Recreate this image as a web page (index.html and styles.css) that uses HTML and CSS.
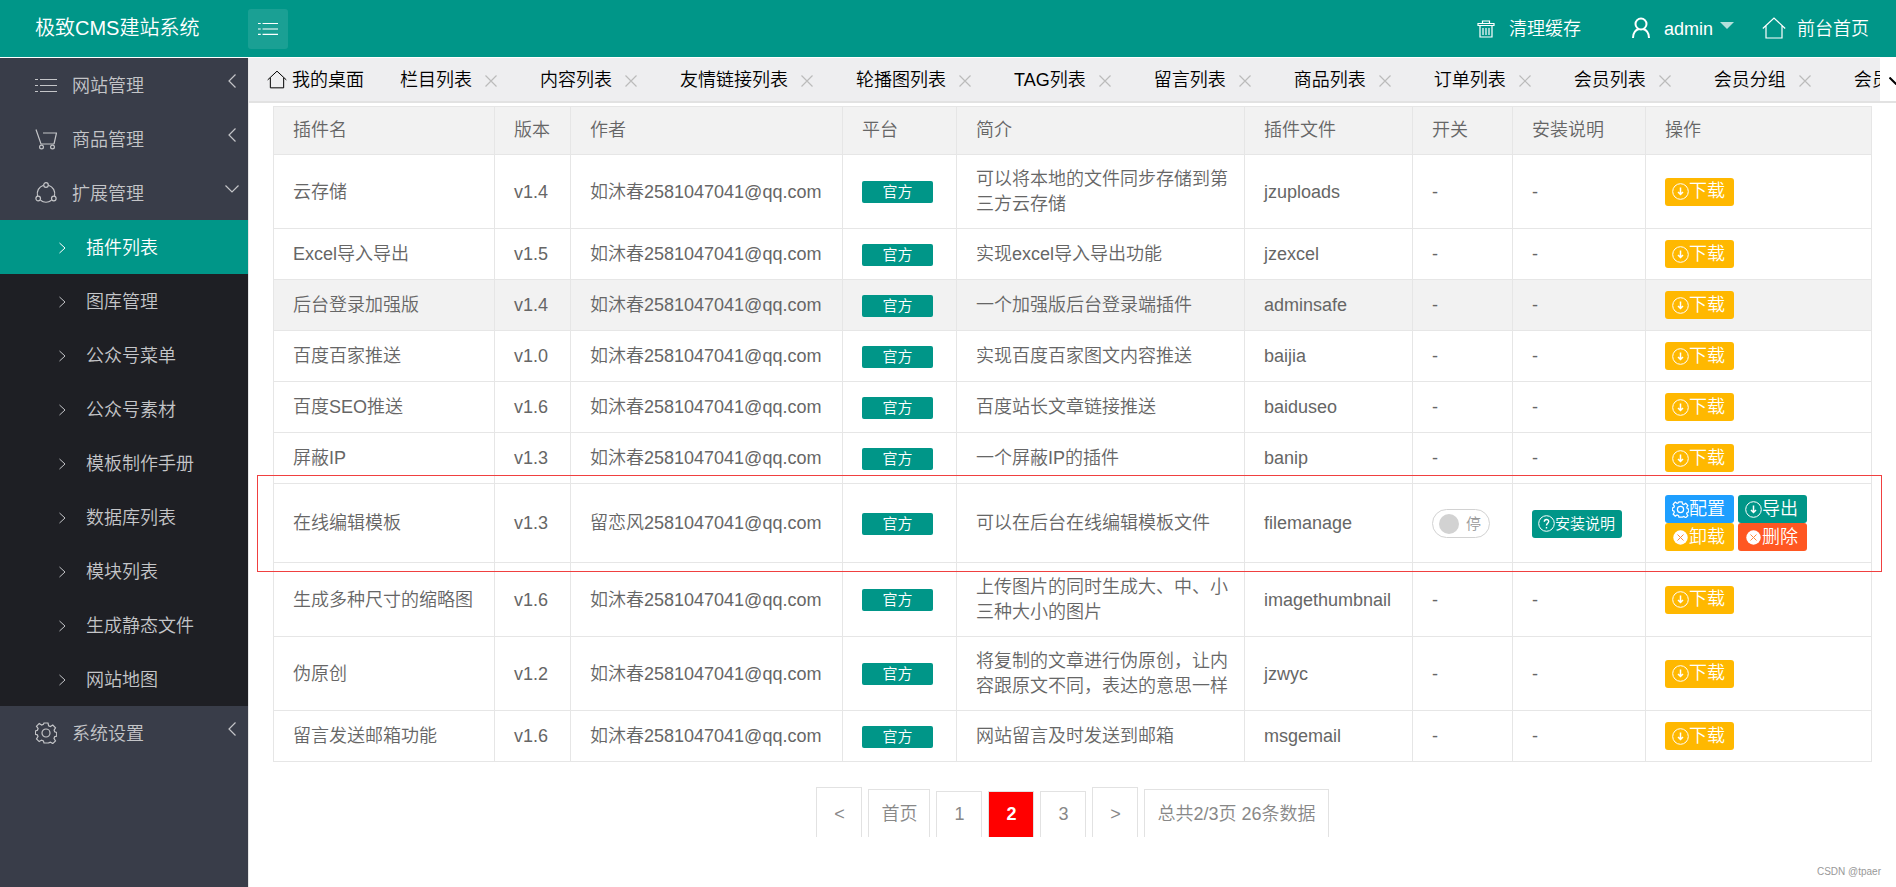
FILE: index.html
```html
<!DOCTYPE html>
<html lang="zh-CN">
<head>
<meta charset="utf-8">
<title>极致CMS建站系统</title>
<link rel="stylesheet" href="styles.css">
</head>
<body>
<svg class="sprite" aria-hidden="true">
  <symbol id="i-list" viewBox="0 0 22 16"><path d="M5 2.500h17M5 8.500h17M5 14.500h17M0 2.500h3M0 8.500h3M0 14.500h3"/></symbol>
  <symbol id="i-cart" viewBox="0 0 22 22"><path d="M1 1.500l5 14.500h13M8 5h13.500l-2.500 11"/><circle cx="6.500" cy="19" r="1.900"/><circle cx="17.500" cy="19" r="1.900"/></symbol>
  <symbol id="i-share" viewBox="0 0 22 22"><path d="M8.500 3.200A9 9 0 0 0 2.500 14M13.500 3.200A9 9 0 0 1 19.500 14M5.500 18.300A9 9 0 0 0 16.500 18.300"/><circle cx="11" cy="3" r="2.300"/><circle cx="3.200" cy="16.500" r="2.300"/><circle cx="18.800" cy="16.500" r="2.300"/></symbol>
  <symbol id="i-gear" viewBox="0 0 22 22"><path d="M9 1h4l.6 2.700 1.800.8 2.400-1.500 2.700 2.800-1.400 2.300.6 1.700 2 .7v3.600l-2.100.7-.6 1.700 1.500 2.400-2.800 2.700-2.300-1.500-1.800.8L13 21H9l-.6-2.100-1.800-.8-2.400 1.500-2.700-2.700L3 14.500l-.7-1.700-1.900-.5V9l2-.7.7-1.800L1.500 4.200 4.200 1.500 6.600 3l1.800-.8z"/><circle cx="11" cy="11" r="4"/></symbol>
  <symbol id="i-home" viewBox="0 0 24 22"><path d="M.8 11.500L12 1l11.200 10.500M4 9v12h16V9"/></symbol>
  <symbol id="i-trash" viewBox="0 0 18 18"><path d="M1 3.500h16v2H1zM5.500 3V1h7v2M3 6v11h12V6M6 8v7M9 8v7M12 8v7"/></symbol>
  <symbol id="i-user" viewBox="0 0 18 22"><circle cx="9" cy="7" r="5.500"/><path d="M1 21c0-5 2.500-8 6-9M17 21c0-5-2.500-8-6-9"/></symbol>
  <symbol id="i-left" viewBox="0 0 8 14"><path d="M7.500.5L1 7l6.500 6.500"/></symbol>
  <symbol id="i-right" viewBox="0 0 7 12"><path d="M.5 1L6 6 .5 11"/></symbol>
  <symbol id="i-down" viewBox="0 0 14 8"><path d="M.5.5L7 7 13.500.5"/></symbol>
  <symbol id="i-close" viewBox="0 0 12 12"><path d="M.5.5l11 11M11.500.5l-11 11"/></symbol>
  <symbol id="i-get" viewBox="0 0 17 17"><circle cx="8.500" cy="8.500" r="7.800"/><path stroke-width="1.500" d="M8.500 4.500v7M6 9l2.500 2.500L11 9"/></symbol>
  <symbol id="i-help" viewBox="0 0 17 17"><circle cx="8.500" cy="8.500" r="7.800"/><path stroke-width="1.400" d="M6.300 6.800c0-3.200 4.500-3 4.400-.3 0 1.700-2.200 1.900-2.200 4M8.500 12v1.500"/></symbol>
  <symbol id="i-off" viewBox="0 0 17 17"><circle cx="8.500" cy="8.500" r="7.200" fill="#fff" stroke="none"/><path class="cut" d="M5.500 5.500l6 6M11.500 5.500l-6 6"/></symbol>
</svg>

<header class="top">
  <a class="brand" href="#">极致CMS建站系统</a>
  <button class="fold" type="button" aria-label="菜单"><svg width="20" height="15"><use href="#i-list"/></svg></button>
  <nav class="top-nav">
    <a class="clear" href="#"><svg width="18" height="18"><use href="#i-trash"/></svg>清理缓存</a>
    <a class="user" href="#"><svg class="bold" width="18" height="22"><use href="#i-user"/></svg>admin<i class="caret"></i></a>
    <a class="front" href="#"><svg width="24" height="22"><use href="#i-home"/></svg>前台首页</a>
  </nav>
</header>

<div class="body">
  <nav class="side">
    <a class="group" href="#"><svg width="22" height="16"><use href="#i-list"/></svg><span>网站管理</span><svg class="arrow" width="8" height="14"><use href="#i-left"/></svg></a>
    <a class="group" href="#"><svg width="22" height="22"><use href="#i-cart"/></svg><span>商品管理</span><svg class="arrow" width="8" height="14"><use href="#i-left"/></svg></a>
    <a class="group open" href="#"><svg width="22" height="22"><use href="#i-share"/></svg><span>扩展管理</span><svg class="arrow" width="14" height="8"><use href="#i-down"/></svg></a>
    <div class="sub">
      <a class="on" href="#"><svg width="7" height="12"><use href="#i-right"/></svg>插件列表</a>
      <a href="#"><svg width="7" height="12"><use href="#i-right"/></svg>图库管理</a>
      <a href="#"><svg width="7" height="12"><use href="#i-right"/></svg>公众号菜单</a>
      <a href="#"><svg width="7" height="12"><use href="#i-right"/></svg>公众号素材</a>
      <a href="#"><svg width="7" height="12"><use href="#i-right"/></svg>模板制作手册</a>
      <a href="#"><svg width="7" height="12"><use href="#i-right"/></svg>数据库列表</a>
      <a href="#"><svg width="7" height="12"><use href="#i-right"/></svg>模块列表</a>
      <a href="#"><svg width="7" height="12"><use href="#i-right"/></svg>生成静态文件</a>
      <a href="#"><svg width="7" height="12"><use href="#i-right"/></svg>网站地图</a>
    </div>
    <a class="group" href="#"><svg width="22" height="22"><use href="#i-gear"/></svg><span>系统设置</span><svg class="arrow" width="8" height="14"><use href="#i-left"/></svg></a>
  </nav>

  <main class="main">
    <div class="tabs">
      <div class="tab-list">
        <a class="tab home" href="#"><svg width="20" height="19"><use href="#i-home"/></svg>我的桌面</a>
        <a class="tab" href="#">栏目列表<svg width="12" height="12"><use href="#i-close"/></svg></a>
        <a class="tab" href="#">内容列表<svg width="12" height="12"><use href="#i-close"/></svg></a>
        <a class="tab" href="#">友情链接列表<svg width="12" height="12"><use href="#i-close"/></svg></a>
        <a class="tab" href="#">轮播图列表<svg width="12" height="12"><use href="#i-close"/></svg></a>
        <a class="tab" href="#">TAG列表<svg width="12" height="12"><use href="#i-close"/></svg></a>
        <a class="tab" href="#">留言列表<svg width="12" height="12"><use href="#i-close"/></svg></a>
        <a class="tab" href="#">商品列表<svg width="12" height="12"><use href="#i-close"/></svg></a>
        <a class="tab" href="#">订单列表<svg width="12" height="12"><use href="#i-close"/></svg></a>
        <a class="tab" href="#">会员列表<svg width="12" height="12"><use href="#i-close"/></svg></a>
        <a class="tab" href="#">会员分组<svg width="12" height="12"><use href="#i-close"/></svg></a>
        <a class="tab" href="#">会员权限<svg width="12" height="12"><use href="#i-close"/></svg></a>
      </div>
      <button class="more" type="button" aria-label="更多"><svg class="bold" width="14" height="8"><use href="#i-down"/></svg></button>
    </div>

    <div class="content">
      <table class="grid">
        <colgroup><col class="c1"><col class="c2"><col class="c3"><col class="c4"><col class="c5"><col class="c6"><col class="c7"><col class="c8"><col></colgroup>
        <thead>
          <tr><th>插件名</th><th>版本</th><th>作者</th><th>平台</th><th>简介</th><th>插件文件</th><th>开关</th><th>安装说明</th><th>操作</th></tr>
        </thead>
        <tbody>
          <tr><td>云存储</td><td>v1.4</td><td>如沐春2581047041@qq.com</td><td><span class="tag">官方</span></td><td>可以将本地的文件同步存储到第三方云存储</td><td>jzuploads</td><td>-</td><td>-</td><td><div class="ops"><button class="btn warn" type="button"><svg width="17" height="17"><use href="#i-get"/></svg>下载</button></div></td></tr>
          <tr><td>Excel导入导出</td><td>v1.5</td><td>如沐春2581047041@qq.com</td><td><span class="tag">官方</span></td><td>实现excel导入导出功能</td><td>jzexcel</td><td>-</td><td>-</td><td><div class="ops"><button class="btn warn" type="button"><svg width="17" height="17"><use href="#i-get"/></svg>下载</button></div></td></tr>
          <tr class="hover"><td>后台登录加强版</td><td>v1.4</td><td>如沐春2581047041@qq.com</td><td><span class="tag">官方</span></td><td>一个加强版后台登录端插件</td><td>adminsafe</td><td>-</td><td>-</td><td><div class="ops"><button class="btn warn" type="button"><svg width="17" height="17"><use href="#i-get"/></svg>下载</button></div></td></tr>
          <tr><td>百度百家推送</td><td>v1.0</td><td>如沐春2581047041@qq.com</td><td><span class="tag">官方</span></td><td>实现百度百家图文内容推送</td><td>baijia</td><td>-</td><td>-</td><td><div class="ops"><button class="btn warn" type="button"><svg width="17" height="17"><use href="#i-get"/></svg>下载</button></div></td></tr>
          <tr><td>百度SEO推送</td><td>v1.6</td><td>如沐春2581047041@qq.com</td><td><span class="tag">官方</span></td><td>百度站长文章链接推送</td><td>baiduseo</td><td>-</td><td>-</td><td><div class="ops"><button class="btn warn" type="button"><svg width="17" height="17"><use href="#i-get"/></svg>下载</button></div></td></tr>
          <tr><td>屏蔽IP</td><td>v1.3</td><td>如沐春2581047041@qq.com</td><td><span class="tag">官方</span></td><td>一个屏蔽IP的插件</td><td>banip</td><td>-</td><td>-</td><td><div class="ops"><button class="btn warn" type="button"><svg width="17" height="17"><use href="#i-get"/></svg>下载</button></div></td></tr>
          <tr class="marked"><td>在线编辑模板</td><td>v1.3</td><td>留恋风2581047041@qq.com</td><td><span class="tag">官方</span></td><td>可以在后台在线编辑模板文件</td><td>filemanage</td><td><label class="switch"><input type="checkbox"><span>停</span></label></td><td><button class="btn main-color small" type="button"><svg width="17" height="17"><use href="#i-help"/></svg>安装说明</button></td><td><div class="ops"><button class="btn info" type="button"><svg width="17" height="17"><use href="#i-gear"/></svg>配置</button><button class="btn main-color" type="button"><svg width="17" height="17"><use href="#i-get"/></svg>导出</button><button class="btn warn" type="button"><svg width="17" height="17"><use href="#i-off"/></svg>卸载</button><button class="btn danger" type="button"><svg width="17" height="17"><use href="#i-off"/></svg>删除</button></div></td></tr>
          <tr><td>生成多种尺寸的缩略图</td><td>v1.6</td><td>如沐春2581047041@qq.com</td><td><span class="tag">官方</span></td><td>上传图片的同时生成大、中、小三种大小的图片</td><td>imagethumbnail</td><td>-</td><td>-</td><td><div class="ops"><button class="btn warn" type="button"><svg width="17" height="17"><use href="#i-get"/></svg>下载</button></div></td></tr>
          <tr><td>伪原创</td><td>v1.2</td><td>如沐春2581047041@qq.com</td><td><span class="tag">官方</span></td><td>将复制的文章进行伪原创，让内容跟原文不同，表达的意思一样</td><td>jzwyc</td><td>-</td><td>-</td><td><div class="ops"><button class="btn warn" type="button"><svg width="17" height="17"><use href="#i-get"/></svg>下载</button></div></td></tr>
          <tr><td>留言发送邮箱功能</td><td>v1.6</td><td>如沐春2581047041@qq.com</td><td><span class="tag">官方</span></td><td>网站留言及时发送到邮箱</td><td>msgemail</td><td>-</td><td>-</td><td><div class="ops"><button class="btn warn" type="button"><svg width="17" height="17"><use href="#i-get"/></svg>下载</button></div></td></tr>
        </tbody>
      </table>

      <nav class="pager">
        <a class="step" href="#">&lt;</a>
        <a class="text" href="#">首页</a>
        <a href="#">1</a>
        <a class="current" href="#">2</a>
        <a href="#">3</a>
        <a class="step" href="#">&gt;</a>
        <span class="text">总共2/3页 26条数据</span>
      </nav>
    </div>
  </main>
</div>
<div class="credit">CSDN @tpaer</div>
</body>
</html>
```
FILE: styles.css
```css
* { box-sizing: border-box; }

body {
  margin: 0;
  min-height: 100vh;
  display: flex;
  flex-direction: column;
  position: relative;
  overflow: hidden;
  background: #fff;
  color: #666;
  font: 350 18px/25px "Liberation Sans", "Noto Sans CJK SC", sans-serif;
}

a { color: inherit; text-decoration: none; }
button { font: inherit; border: 0; padding: 0; }
svg { fill: none; stroke: currentColor; stroke-width: 1.2; flex: none; }
.bold { stroke-width: 2; }
.sprite { position: absolute; width: 0; height: 0; }

/* Top bar */
.top {
  display: flex;
  align-items: center;
  height: 58px;
  padding-right: 27px;
  border-bottom: 1px solid #fff;
  background: #009688;
  color: #fff;
}
.brand { width: 248px; padding-left: 35px; font-size: 20px; }
.fold {
  display: grid;
  place-items: center;
  width: 40px;
  height: 40px;
  border-radius: 3px;
  background: rgba(255, 255, 255, .1);
  color: #fff;
}
.top-nav { display: flex; align-items: center; margin-left: auto; padding-top: 2px; }
.top-nav a { display: flex; align-items: center; }
.clear { gap: 14px; }
.clear svg { margin-bottom: 2px; }
.user { gap: 14px; margin-left: 51px; }
.user svg, .front svg { margin-bottom: 4px; }
.front { gap: 11px; margin-left: 28px; }
.caret {
  margin: 0 0 9px -7px;
  border: 7px solid transparent;
  border-top-color: rgba(255, 255, 255, .7);
  border-bottom: 0;
}

/* Sidebar */
.body { display: flex; flex: 1; min-height: 0; }
.side { flex: 0 0 248px; background: #393d49; color: #c4c5c8; }
.group { display: flex; align-items: center; height: 54px; padding: 0 12px 0 35px; }
.group span { flex: 1; margin-left: 15px; padding-top: 2px; }
.group .arrow { margin-bottom: 8px; }
.group.open { padding-right: 9px; }
.sub { background: #1e1f24; }
.sub a { display: flex; align-items: center; gap: 20px; height: 54px; padding: 2px 0 0 59px; }
.sub svg { stroke-width: 1; }
.sub .on { background: #009688; color: #fff; }

/* Tabs */
.main { flex: 1; min-width: 0; border-left: 1px solid #e6e6e6; }
.tabs {
  display: flex;
  height: 45px;
  border-bottom: 2px solid #e2e2e2;
  background: #eeeef0;
  color: #000;
}
.tab-list { display: flex; flex: 1; overflow: hidden; }
.tab { display: flex; flex: none; align-items: center; gap: 13px; padding: 2px 24px 0 19px; white-space: nowrap; }
.tab svg { color: #bbb; }
.tab.home { gap: 5px; padding: 2px 17px 0 18px; }
.tab.home svg { margin-bottom: 2px; color: #000; }
.more { width: 16px; padding-left: 9px; overflow: hidden; background: #fff; color: #000; }

/* Plugin table */
.content { padding: 3px 24px 0; }
.grid { width: 100%; table-layout: fixed; border-collapse: collapse; }
.c1 { width: 221px; }
.c2 { width: 76px; }
.c3 { width: 272px; }
.c4 { width: 114px; }
.c5 { width: 288px; }
.c6 { width: 168px; }
.c7 { width: 100px; }
.c8 { width: 133px; }
.grid th, .grid td {
  height: 51px;
  padding: 12px 15px 11px 19px;
  border: 1px solid #e6e6e6;
  text-align: left;
  font-weight: inherit;
}
.grid th { height: 48px; padding-top: 10px; padding-bottom: 10px; background: #f2f2f2; white-space: nowrap; }
.hover { background: #f2f2f2; }
.tag {
  display: block;
  width: 71px;
  border-radius: 2px;
  background: #009688;
  color: #fff;
  font-size: 15px;
  line-height: 22px;
  text-align: center;
}
.ops { display: flex; flex-wrap: wrap; gap: 0 4px; }
.grid td:last-child { padding-top: 11px; padding-bottom: 11px; }
.btn {
  display: flex;
  align-items: center;
  height: 28px;
  padding: 0 9px 0 7px;
  border-radius: 3px;
  color: #fff;
  white-space: nowrap;
}
.btn svg { stroke-width: 1; }
.small { padding: 0 7px 0 6px; font-size: 15px; }
.warn { background: #ffb800; }
.info { background: #1e9fff; }
.info.btn svg { stroke-width: 1.6; }
.main-color { background: #009688; }
.danger { background: #ff5722; }
.cut { stroke: #ff8a3c; }

.switch {
  display: flex;
  align-items: center;
  gap: 7px;
  width: 58px;
  height: 29px;
  padding-left: 6px;
  border: 1px solid #d2d2d2;
  border-radius: 15px;
  color: #999;
  font-size: 15px;
}
.switch input {
  appearance: none;
  width: 20px;
  height: 20px;
  margin: 0;
  border-radius: 50%;
  background: #d2d2d2;
}

/* Frame drawn around the highlighted row */
.marked { position: relative; }
.marked td { height: 79px; }
.marked td:first-child::after {
  content: "";
  position: absolute;
  inset: -9px -10px -9px -17px;
  border: 1px solid #f04040;
  pointer-events: none;
}

/* Pagination */
.pager {
  display: flex;
  justify-content: center;
  align-items: flex-end;
  gap: 6px;
  margin-top: 25px;
  color: #888;
  line-height: 45px;
  text-align: center;
}
.pager > * { min-width: 46px; border: 1px solid #e2e2e2; border-bottom: 0; }
.pager .step { padding-top: 4px; }
.pager .text { padding: 2px 12px 0; }
.pager .current { background: #f00; color: #fff; font-weight: bold; }

.credit {
  position: absolute;
  right: 15px;
  bottom: 7px;
  color: #999;
  font-size: 10px;
  line-height: 16px;
}
```
